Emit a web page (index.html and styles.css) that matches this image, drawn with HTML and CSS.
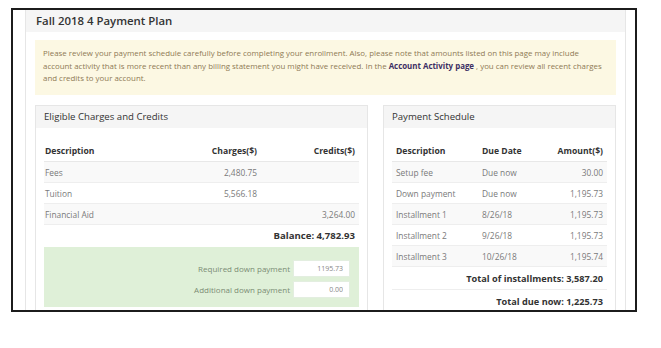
FILE: index.html
```html
<!DOCTYPE html>
<html lang="en">
<head>
  <meta charset="UTF-8" />
  <title>Fall 2018 4 Payment Plan</title>
  <link rel="stylesheet" href="styles.css">
</head>
<body>
  <div class="shot">
    <div class="panel main">
      <div class="panel-heading"><h3>Fall 2018 4 Payment Plan</h3></div>
      <div class="panel-body">
        <div class="alert">
          Please review your payment schedule carefully before completing your enrollment. Also, please note that amounts listed on this page may include<br>
          account activity that is more recent than any billing statement you might have received. In the <a href="#">Account Activity page</a> , you can review all recent charges<br>
          and credits to your account.
        </div>

        <div class="cols">
          <div class="panel sub">
            <div class="panel-heading"><h4>Eligible Charges and Credits</h4></div>
            <div class="panel-body">
              <table class="charges">
                <thead>
                  <tr><th>Description</th><th class="num">Charges($)</th><th class="num">Credits($)</th></tr>
                </thead>
                <tbody>
                  <tr><td>Fees</td><td class="num">2,480.75</td><td class="num"></td></tr>
                  <tr><td>Tuition</td><td class="num">5,566.18</td><td class="num"></td></tr>
                  <tr><td>Financial Aid</td><td class="num"></td><td class="num">3,264.00</td></tr>
                </tbody>
              </table>
              <div class="balance">Balance: 4,782.93</div>
              <div class="down">
                <div class="field">
                  <label>Required down payment</label>
                  <input value="1195.73" readonly />
                </div>
                <div class="field">
                  <label>Additional down payment</label>
                  <input value="0.00" />
                </div>
              </div>
            </div>
          </div>

          <div class="panel sub">
            <div class="panel-heading"><h4>Payment Schedule</h4></div>
            <div class="panel-body">
              <table class="schedule">
                <thead>
                  <tr><th>Description</th><th>Due Date</th><th class="num">Amount($)</th></tr>
                </thead>
                <tbody>
                  <tr><td>Setup fee</td><td>Due now</td><td class="num">30.00</td></tr>
                  <tr><td>Down payment</td><td>Due now</td><td class="num">1,195.73</td></tr>
                  <tr><td>Installment 1</td><td>8/26/18</td><td class="num">1,195.73</td></tr>
                  <tr><td>Installment 2</td><td>9/26/18</td><td class="num">1,195.73</td></tr>
                  <tr><td>Installment 3</td><td>10/26/18</td><td class="num">1,195.74</td></tr>
                  <tr class="total"><td colspan="3">Total of installments: 3,587.20</td></tr>
                  <tr class="total"><td colspan="3">Total due now: 1,225.73</td></tr>
                </tbody>
              </table>
            </div>
          </div>
        </div>
      </div>
    </div>
  </div>
</body>
</html>
```

FILE: styles.css
```css
body {
  margin: 0;
  background: #fff;
  font-family: 'Open Sans', sans-serif;
  color: #333;
}
.shot {
  margin: 8px 0 0 11px;
  width: 610px;
  height: 300px;
  padding-left: 12px;
  border: 2px solid #1c1c1c;
  overflow: hidden;
}
.panel {
  border: 1px solid #e6e6e6;
  background: #fff;
}
.main {
  width: 599px;
  border-top: none;
}
.panel-heading {
  background: #f5f5f5;
}
.main > .panel-heading {
  height: 22px;
  padding-left: 10px;
}
h3 {
  margin: 0;
  font-size: 11.4px;
  font-weight: 600;
  line-height: 22px;
}
.main > .panel-body {
  padding: 8px 9px;
}
.alert {
  background: #fcf8e3;
  color: #8f7a55;
  font-size: 7.9px;
  line-height: 12.5px;
  padding: 7px 8px 11px;
  height: 37px;
  white-space: nowrap;
}
.alert a {
  color: #3d2f63;
  font-weight: 700;
  text-decoration: none;
}
.cols {
  margin-top: 10px;
  display: grid;
  grid-template-columns: 333px 233px;
  gap: 15px;
}
.sub > .panel-heading {
  height: 22px;
  padding-left: 8px;
}
h4 {
  margin: 0;
  font-size: 9.6px;
  font-weight: 400;
  line-height: 22px;
  color: #333;
}
.sub > .panel-body {
  padding: 12px 8px 0 8px;
}
table {
  width: 100%;
  border-collapse: collapse;
  font-size: 8.4px;
}
th {
  text-align: left;
  font-weight: 700;
  font-size: 8.6px;
  height: 21px;
  border-bottom: 1px solid #e8e8e8;
  padding: 0 4px;
}
td {
  color: #7a7a7a;
  height: 20px;
  border-bottom: 1px solid #eeeeee;
  padding: 0 4px;
}
tbody tr:nth-child(odd) {
  background: #f9f9f9;
}
.num {
  text-align: right;
}
.charges th:first-child,
.charges td:first-child {
  padding-left: 1px;
}
.charges th:nth-child(2) {
  width: 110px;
}
.charges th:nth-child(3) {
  width: 90px;
}
.schedule th:first-child {
  width: 78px;
}
.schedule th:nth-child(2) {
  width: 60px;
}
.schedule tr.total {
  background: #fff;
}
.schedule tr.total td {
  text-align: right;
  color: #333;
  font-weight: 700;
  font-size: 9.2px;
  height: 22px;
}
.balance {
  text-align: right;
  font-weight: 700;
  font-size: 9.6px;
  line-height: 21px;
  padding-right: 4px;
}
.down {
  background: #dff0d8;
  margin-top: 1px;
  padding: 13px 9px 9px;
}
.field {
  display: flex;
  justify-content: flex-end;
  align-items: center;
  gap: 3px;
  margin-bottom: 4px;
}
.field:last-child {
  margin-bottom: 0;
}
.field label {
  color: #7b8c74;
  font-size: 8px;
}
.field input {
  width: 57px;
  height: 17px;
  box-sizing: border-box;
  border: 1px solid #e3eee0;
  background: #fff;
  font-family: inherit;
  font-size: 7px;
  color: #888;
  text-align: right;
  padding: 0 6px;
}
```
